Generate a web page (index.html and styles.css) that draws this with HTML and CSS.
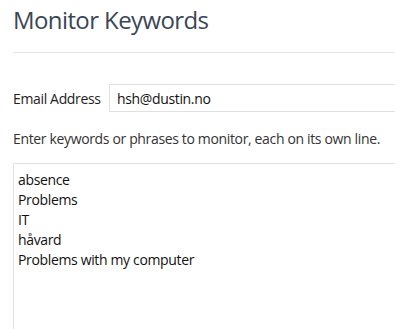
FILE: index.html
```html
<!DOCTYPE html>
<html lang="en">
  <head>
    <meta charset="UTF-8" />
    <meta name="viewport" content="width=device-width, initial-scale=1.0" />
    <title>Monitor Keywords</title>
    <link rel="stylesheet" href="styles.css">
  </head>
  <body>
    <div class="container">
      <h1>Monitor Keywords</h1>
      <form class="keyword-form">
        <div class="form-group">
          <label for="email">Email Address</label>
          <input type="text" id="email" name="email" value="hsh@dustin.no" />
        </div>
        <p class="hint">Enter keywords or phrases to monitor, each on its own line.</p>
        <textarea id="keywords" name="keywords">absence
Problems
IT
håvard
Problems with my computer</textarea>
      </form>
    </div>
  </body>
</html>
```

FILE: styles.css
```css
body {
  font-family: "Open Sans", "Noto Sans", sans-serif;
  font-size: 14px;
  letter-spacing: -0.35px;
  margin: 0;
  padding: 0;
  background-color: #ffffff;
  color: #222222;
  overflow: hidden;
}
.container {
  width: 440px;
  padding-left: 13px;
}
h1 {
  font-size: 24px;
  font-weight: normal;
  letter-spacing: -0.6px;
  color: #3b4656;
  margin: 0;
  padding-top: 4px;
  line-height: 32px;
  padding-bottom: 16px;
  border-bottom: 1px solid #e6e6e6;
}
.keyword-form {
  display: flex;
  flex-direction: column;
  padding-top: 31px;
}
.form-group {
  display: flex;
  align-items: center;
}
label {
  width: 96px;
}
input {
  flex: 1;
  height: 28px;
  box-sizing: border-box;
  padding: 0 7px;
  border: 1px solid #dfe1e6;
  font: inherit;
  letter-spacing: inherit;
  color: #111111;
}
.hint {
  margin: 17px 0 0;
  line-height: 20px;
  color: #333333;
}
textarea {
  margin-top: 14px;
  height: 180px;
  padding: 6px 4px;
  border: 1px solid #dfe1e6;
  font: inherit;
  letter-spacing: inherit;
  line-height: 20px;
  color: #111111;
  resize: none;
}
```
